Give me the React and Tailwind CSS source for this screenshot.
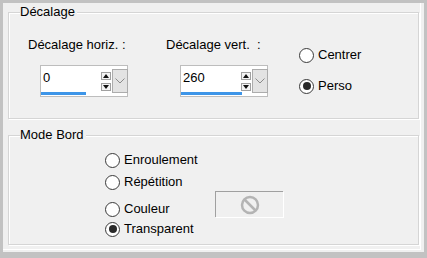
import React from "react";

const Radio = ({ checked }) => (
  <span className="flex h-[15px] w-[15px] shrink-0 items-center justify-center rounded-full border border-[#3a3a3a] bg-white">
    {checked && <span className="h-[8px] w-[8px] rounded-full bg-[#2a2a2a]" />}
  </span>
);

const RadioRow = ({ label, checked, className = "" }) => (
  <div className={`flex h-[20px] items-center gap-[4px] ${className}`}>
    <Radio checked={checked} />
    <span>{label}</span>
  </div>
);

const Group = ({ title, className = "", children }) => (
  <div
    className={`relative mx-[5px] border border-[#d5d5d5] shadow-[inset_1px_1px_0_#fff,1px_1px_0_#fff] ${className}`}
  >
    <span className="absolute left-[11px] top-[-9px] bg-[#f0f0f0] pr-[2px] leading-[15px]">
      {title}
    </span>
    {children}
  </div>
);

const SpinBox = ({ value, fill, className = "" }) => (
  <div
    className={`relative flex h-[32px] w-[88px] border border-[#bdbdbd] bg-white ${className}`}
  >
    <span className="pl-[2px] pt-[4px] leading-[15px]">{value}</span>
    <div className="absolute left-[60px] top-[6px] flex flex-col gap-[3px]">
      <div className="flex h-[8px] w-[10px] items-center justify-center border border-[#a0a0a0] bg-[#f4f4f4]">
        <svg width="6" height="4" viewBox="0 0 6 4">
          <path d="M0 4 L3 0 L6 4 Z" fill="#111" />
        </svg>
      </div>
      <div className="flex h-[8px] w-[10px] items-center justify-center border border-[#a0a0a0] bg-[#f4f4f4]">
        <svg width="6" height="4" viewBox="0 0 6 4">
          <path d="M0 0 L3 4 L6 0 Z" fill="#111" />
        </svg>
      </div>
    </div>
    <div className="absolute left-[71px] top-[3px] flex h-[24px] w-[16px] items-center justify-center border border-[#acacac] bg-[#e3e3e3]">
      <svg width="10" height="6" viewBox="0 0 10 6">
        <path d="M0.5 0.5 L5 5 L9.5 0.5" fill="none" stroke="#8a8a8a" strokeWidth="1" />
      </svg>
    </div>
    <div
      className="absolute bottom-[1px] left-0 h-[3px] bg-[#3d95e8]"
      style={{ width: fill }}
    />
  </div>
);

export default function App() {
  return (
    <div className="h-[258px] w-[427px] bg-[#c2c2c2] pl-[3px] pt-[3px] font-['Liberation_Sans',Arial,sans-serif] text-[13px] text-black">
      <div className="h-[249px] w-[421px] bg-[#f0f0f0] pt-[9px] shadow-[inset_-3px_-2px_0_#f0f0f0,inset_-4px_-3px_0_#fff]">
        <Group title="Décalage" className="h-[107px]">
          <div className="flex pl-[19px] pt-[24px]">
            <div className="w-[138px]">
              <div className="leading-[15px]">Décalage horiz. :</div>
              <SpinBox value="0" fill={45} className="ml-[12px] mt-[13px]" />
            </div>
            <div className="w-[133px]">
              <div className="leading-[15px] whitespace-pre">Décalage vert.  :</div>
              <SpinBox value="260" fill={61} className="ml-[14px] mt-[13px]" />
            </div>
            <div className="mt-[8px] flex flex-col">
              <RadioRow label="Centrer" />
              <RadioRow label="Perso" checked className="mt-[11px]" />
            </div>
          </div>
        </Group>
        <Group title="Mode Bord" className="mt-[16px] h-[110px]">
          <div className="flex flex-col pl-[96px] pt-[14px]">
            <RadioRow label="Enroulement" />
            <RadioRow label="Répétition" className="mt-[2px]" />
            <div className="-mt-[1px] flex items-start">
              <RadioRow label="Couleur" className="mt-[8px] w-[110px]" />
              <div className="flex h-[26px] w-[68px] items-center justify-center border-l border-t border-[#a0a0a0] shadow-[1px_1px_0_#fff] bg-[#f0f0f0]">
                <svg width="20" height="20" viewBox="0 0 20 20">
                  <circle cx="10" cy="10" r="8" fill="none" stroke="#b4b4b4" strokeWidth="2.5" />
                  <path d="M4.5 4.5 L15.5 15.5" stroke="#b4b4b4" strokeWidth="2.5" />
                </svg>
              </div>
            </div>
            <RadioRow label="Transparent" checked />
          </div>
        </Group>
      </div>
    </div>
  );
}
